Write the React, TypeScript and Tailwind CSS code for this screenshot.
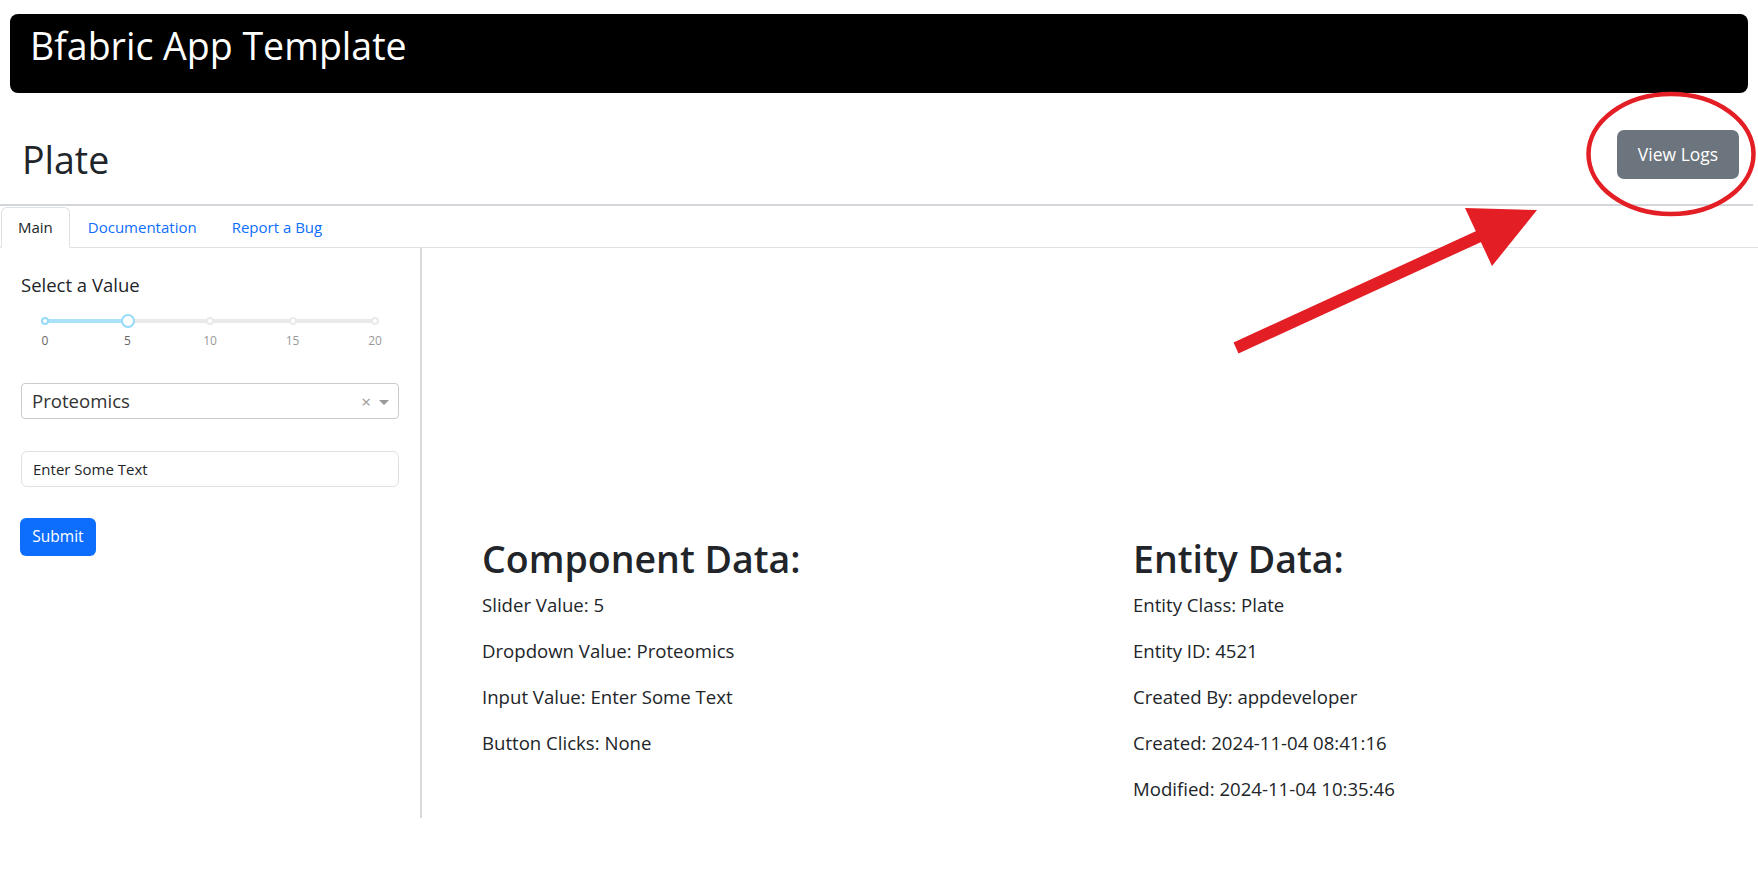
import React from 'react'

const componentRows = ['Slider Value: 5', 'Dropdown Value: Proteomics', 'Input Value: Enter Some Text', 'Button Clicks: None']
const entityRows = [
	'Entity Class: Plate',
	'Entity ID: 4521',
	'Created By: appdeveloper',
	'Created: 2024-11-04 08:41:16',
	'Modified: 2024-11-04 10:35:46',
]
const marks = [0, 5, 10, 15, 20]

function Slider({ value }: { value: number }) {
	const pct = (v: number) => `${(v / 20) * 100}%`
	return (
		<div className="relative ml-[24px] mt-[15px] h-[14px] w-[330px]">
			<div className="absolute left-0 right-0 top-[5px] h-[4px] rounded-full bg-[#e9e9e9]" />
			<div className="absolute left-0 top-[5px] h-[4px] rounded-full bg-[#abe2fb]" style={{ width: pct(value) }} />
			{marks.map((m) => (
				<span
					key={m}
					className={`absolute top-[3px] h-[8px] w-[8px] -translate-x-1/2 rounded-full border-2 bg-white ${m <= value ? 'border-[#96dbfa]' : 'border-[#e9e9e9]'}`}
					style={{ left: pct(m) }}
				/>
			))}
			<span className="absolute top-0 h-[14px] w-[14px] -translate-x-1/2 rounded-full border-2 border-[#96dbfa] bg-white" style={{ left: pct(value) }} />
			{marks.map((m) => (
				<span
					key={'l' + m}
					className={`absolute top-[19px] -translate-x-1/2 text-[12px] leading-[16px] ${m <= value ? 'text-[#666]' : 'text-[#999]'}`}
					style={{ left: pct(m) }}
				>
					{m}
				</span>
			))}
		</div>
	)
}

export default function App() {
	return (
		<div className="relative min-h-[889px] bg-white font-['Open_Sans',sans-serif] text-[#212529]">
			<div className="px-[10px] pt-[14px]">
				<div className="h-[79px] rounded-[8px] bg-black pl-[20px] pt-[13px]">
					<h1 className="text-[37.5px] leading-[37.5px] text-white">Bfabric App Template</h1>
				</div>
			</div>

			<div className="flex items-start justify-between pl-[22px] pr-[19px] pt-[37px]">
				<h2 className="mt-[11px] text-[37.5px] leading-[37.5px]">Plate</h2>
				<button className="h-[49px] w-[122px] rounded-[7px] bg-[#6c757d] text-[17.5px] text-white">View Logs</button>
			</div>
			<div className="mr-[5px] mt-[25px] h-[2px] bg-[#d2d5d9]" />

			<nav className="mt-px flex h-[41px] border-b border-[#dee2e6] text-[15px]">
				<div className="-mb-px ml-px h-[41px] rounded-t-[6px] border border-[#dee2e6] border-b-white bg-white px-[16px] leading-[39px]">Main</div>
				<a className="px-[18px] leading-[40px] text-[#0d6efd]">Documentation</a>
				<a className="pl-[17px] pr-[18px] leading-[40px] text-[#0d6efd]">Report a Bug</a>
			</nav>

			<div className="flex">
				<aside className="h-[570px] w-[422px] shrink-0 border-r-2 border-[#d9d9d9] pl-[21px] pt-[23px]">
					<div className="text-[18.5px] leading-[28px]">Select a Value</div>
					<Slider value={5} />
					<div className="mt-[55px] flex h-[36px] w-[378px] items-center rounded-[4px] border border-[#ccc] pl-[10px] pr-[9px] text-[#333]">
						<span className="flex-1 text-[18.6px]">Proteomics</span>
						<span className="mr-[8px] text-[17px] leading-none text-[#999]">×</span>
						<span className="mt-[2px] h-0 w-0 border-x-[5px] border-t-[5px] border-x-transparent border-t-[#999]" />
					</div>
					<input
						readOnly
						defaultValue="Enter Some Text"
						className="mt-[32px] block h-[36px] w-[378px] rounded-[6px] border border-[#dee2e6] pl-[11px] text-[15px] text-[#212529] outline-none"
					/>
					<button className="-ml-px mt-[31px] h-[38px] w-[76px] rounded-[6px] bg-[#0d6efd] text-[15.5px] text-white">Submit</button>
				</aside>

				<main className="grid flex-1 grid-cols-[651px_1fr] pl-[60px] pt-[289px]">
					<section>
						<h3 className="text-[37.5px] font-semibold leading-[44px]">Component Data:</h3>
						<div className="mt-[10px]">
							{componentRows.map((r) => (
								<p key={r} className="mb-[18px] text-[18.6px] leading-[28px]">{r}</p>
							))}
						</div>
					</section>
					<section>
						<h3 className="text-[37.5px] font-semibold leading-[44px]">Entity Data:</h3>
						<div className="mt-[10px]">
							{entityRows.map((r) => (
								<p key={r} className="mb-[18px] text-[18.6px] leading-[28px]">{r}</p>
							))}
						</div>
					</section>
				</main>
			</div>

			{/* red annotation drawn over the screenshot */}
			<svg className="pointer-events-none absolute left-0 top-0" width="1758" height="889" viewBox="0 0 1758 889">
				<ellipse cx="1671" cy="154" rx="82.5" ry="60" fill="none" stroke="#e31e24" strokeWidth="4.5" />
				<line x1="1236" y1="348" x2="1482" y2="235" stroke="#e31e24" strokeWidth="12" />
				<polygon points="1465,208 1537,210 1492,266" fill="#e31e24" />
			</svg>
		</div>
	)
}
